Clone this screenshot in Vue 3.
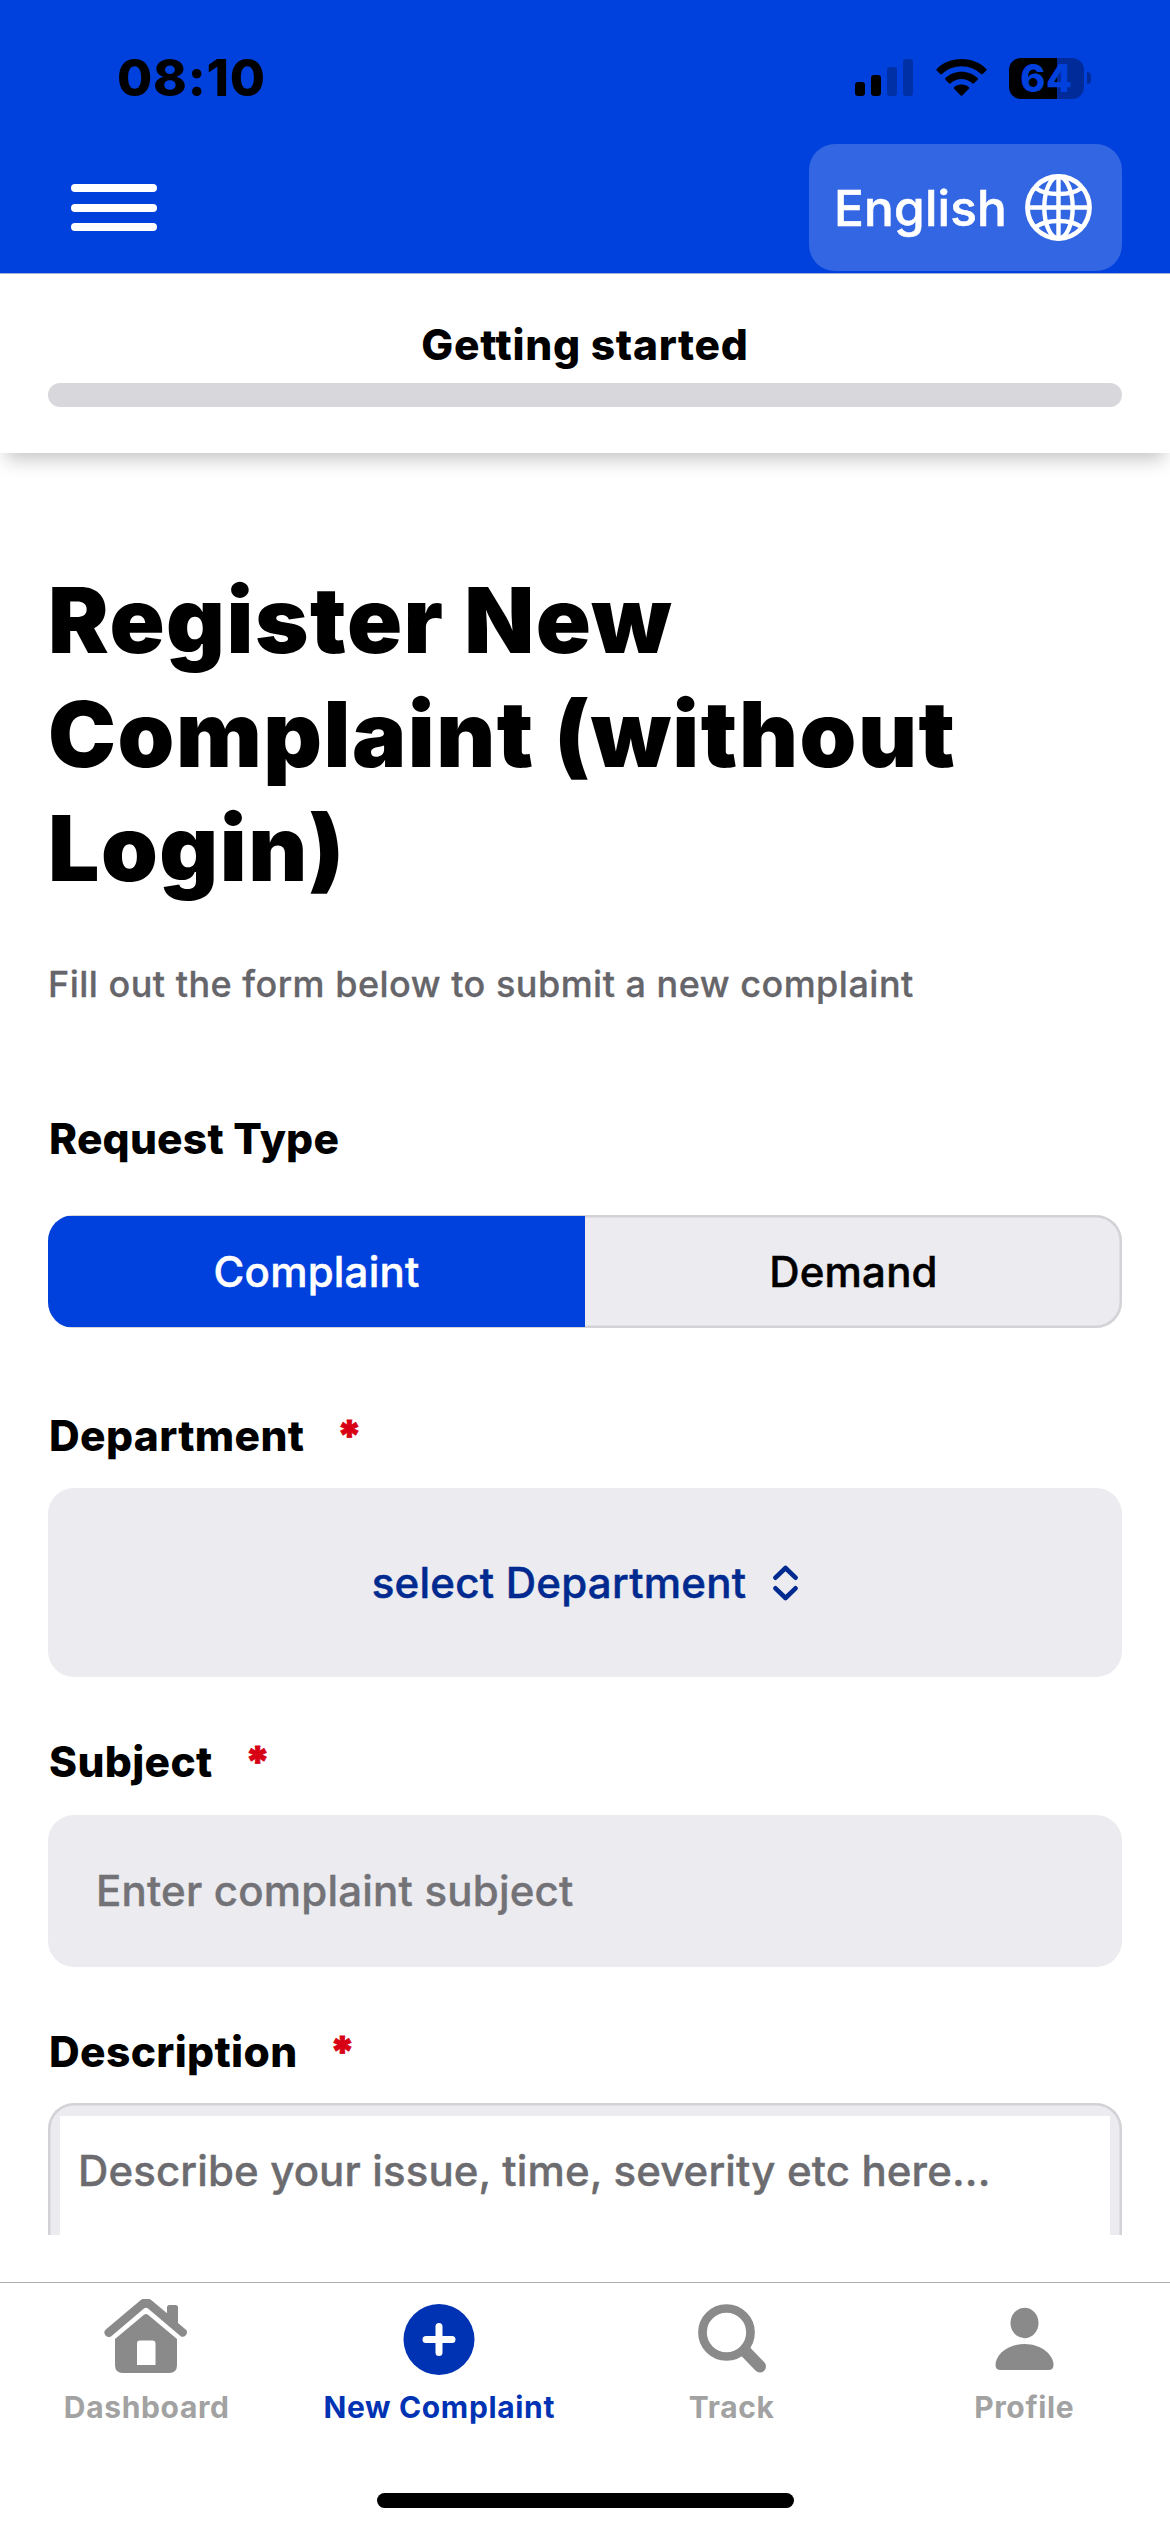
<script setup>
import { ref } from 'vue'

const requestTypes = ['Complaint', 'Demand']
const requestType = ref('Complaint')

const tabs = [
  { id: 'dashboard', label: 'Dashboard' },
  { id: 'new', label: 'New Complaint' },
  { id: 'track', label: 'Track' },
  { id: 'profile', label: 'Profile' },
]
const activeTab = ref('new')
</script>

<template>
  <div class="screen">
    <header class="header">
      <div class="status">
        <span class="time">08:10</span>
        <div class="indicators">
          <svg class="signal" width="58" height="38" viewBox="0 0 58 38">
            <rect x="0" y="23" width="10" height="14" rx="3" />
            <rect x="16" y="16" width="10" height="21" rx="3" />
            <rect x="32" y="8" width="10" height="29" rx="3" opacity=".25" />
            <rect x="48" y="0" width="10" height="37" rx="3" opacity=".25" />
          </svg>
          <svg class="wifi" width="51" height="38" viewBox="0 0 51 38">
            <path d="M25.500 0C35.500 0 44.300 3.800 50.300 9.900C50.800 10.400 50.800 11 50.300 11.500L46.700 15.100C46.200 15.600 45.600 15.600 45.100 15.100C40 10.200 33.100 7.200 25.500 7.200S11 10.200 5.900 15.100C5.400 15.600 4.800 15.600 4.300 15.100L.7 11.500C.2 11 .2 10.400 .7 9.900C6.700 3.800 15.500 0 25.500 0Z" />
            <path d="M25.500 12.700C31.800 12.700 37.500 15.100 41.600 19.100C42.100 19.600 42.100 20.200 41.600 20.700L38 24.300C37.500 24.800 36.900 24.800 36.400 24.300C33.500 21.600 29.700 20 25.500 20S17.500 21.600 14.600 24.300C14.100 24.800 13.500 24.800 13 24.300L9.400 20.700C8.900 20.200 8.900 19.600 9.400 19.100C13.500 15.100 19.200 12.700 25.500 12.700Z" />
            <path d="M25.500 25.600C28.300 25.600 30.900 26.600 32.900 28.200C33.400 28.700 33.400 29.300 32.900 29.800L26.300 36.400C25.800 36.900 25.200 36.900 24.700 36.400L18.100 29.800C17.600 29.300 17.600 28.700 18.100 28.200C20.100 26.600 22.700 25.600 25.500 25.600Z" />
          </svg>
          <div class="battery">
            <div class="cell">64</div>
            <div class="nub"></div>
          </div>
        </div>
      </div>
      <div class="nav">
        <div class="menu"><i></i><i></i><i></i></div>
        <div class="language">
          <span>English</span>
          <svg width="67" height="67" viewBox="0 0 67 67" fill="none" stroke="#fff">
            <circle cx="33.500" cy="33.500" r="31" stroke-width="4.800" />
            <g stroke-width="4.400">
              <path d="M33.500 3V64M3 33.500H64" />
              <ellipse cx="33.500" cy="33.500" rx="14.200" ry="31" />
              <path d="M10.500 14C16 18 24 20 33.500 20S51 18 56.500 14M10.500 53C16 49 24 47 33.500 47S51 49 56.500 53" />
            </g>
          </svg>
        </div>
      </div>
    </header>

    <section class="progress">
      <div class="progress-title">Getting started</div>
      <div class="progress-track"></div>
    </section>

    <main class="form">
      <h1>Register New<br />Complaint (without<br />Login)</h1>
      <p class="lead">Fill out the form below to submit a new complaint</p>

      <label class="label request">Request Type</label>
      <div class="segment">
        <div
          v-for="t in requestTypes"
          :key="t"
          class="option"
          :class="{ selected: t === requestType }"
        >{{ t }}</div>
      </div>

      <label class="label">Department<b>*</b></label>
      <div class="select">
        <span>select Department</span>
        <svg width="25" height="36" viewBox="0 0 25 36" fill="none" stroke="#002a8f" stroke-width="4.600" stroke-linecap="round" stroke-linejoin="round">
          <path d="M2.500 12.700L12.500 3L22.500 12.700M2.500 23.300L12.500 33L22.500 23.300" />
        </svg>
      </div>

      <label class="label">Subject<b>*</b></label>
      <div class="input">Enter complaint subject</div>

      <label class="label">Description<b>*</b></label>
      <div class="textarea">
        <div class="textarea-inner">Describe your issue, time, severity etc here...</div>
      </div>
    </main>

    <nav class="tabs">
      <div v-for="tab in tabs" :key="tab.id" class="tab" :class="{ active: tab.id === activeTab }">
        <svg v-if="tab.id === 'dashboard'" width="86" height="80" viewBox="0 0 86 80">
          <path d="M64 8.500Q64 6 66.500 6H72.500Q75 6 75 8.500V24L83.500 31.300A4.500 4.500 0 0 1 78 37.500L45 9.600Q43 8 41 9.600L8 37.500A4.500 4.500 0 0 1 2.200 31L37.500 1.200Q43 -2.600 48.500 1.200L64 14.200Z" />
          <path fill-rule="evenodd" d="M41 15.800Q43 14.200 45 15.800L74 40V66Q74 74 66 74H20Q12 74 12 66V40ZM37 41.500Q34 41.500 34 44.500V66H52.500V44.500Q52.500 41.500 49.500 41.500Z" />
        </svg>
        <svg v-else-if="tab.id === 'new'" width="72" height="80" viewBox="0 0 72 80">
          <circle cx="36" cy="40.500" r="35.500" />
          <path d="M36 27.500V53.500M23 40.500H49" stroke="#fff" stroke-width="7" stroke-linecap="round" />
        </svg>
        <svg v-else-if="tab.id === 'track'" width="72" height="80" viewBox="0 0 72 80" fill="none" stroke="currentColor">
          <circle cx="31.500" cy="33.500" r="24" stroke-width="8.700" />
          <path d="M50 52L65 67.500" stroke-width="12" stroke-linecap="round" />
        </svg>
        <svg v-else width="60" height="80" viewBox="0 0 60 80">
          <ellipse cx="30.500" cy="24" rx="14" ry="15.200" />
          <path d="M30.500 45C47.500 45 59.500 56 59.500 66Q59.500 71 54.500 71H6.500Q1.500 71 1.500 66C1.500 56 13.500 45 30.500 45Z" />
        </svg>
        <span>{{ tab.label }}</span>
      </div>
    </nav>
    <div class="home-indicator"></div>
  </div>
</template>

<style>
body {
  margin: 0;
  background: #fff;
}
</style>

<style scoped>
.screen {
  width: 1170px;
  height: 2532px;
  display: flex;
  flex-direction: column;
  overflow: hidden;
  background: #fff;
  color: #000;
  font-family: Inter, "Liberation Sans", sans-serif;
  font-weight: 500;
}
.screen svg {
  display: block;
  flex: none;
}

.header {
  flex: none;
  height: 273px;
  background: #0040dd;
  border-bottom: 1px solid #a3b1d6;
}
.status {
  box-sizing: border-box;
  height: 144px;
  padding: 48px 79px 36px 117px;
  display: flex;
  align-items: center;
  justify-content: space-between;
}
.time {
  font-size: 51px;
  line-height: 60px;
  font-weight: 800;
  letter-spacing: 0.800px;
}
.indicators {
  display: flex;
  align-items: center;
}
.wifi {
  margin: 0 22px 0 23px;
}
.battery {
  display: flex;
  align-items: center;
  gap: 3px;
}
.cell {
  width: 75px;
  height: 41px;
  border-radius: 12px;
  background: linear-gradient(90deg, #000 48px, #002b99 48px);
  color: #0040dd;
  font-size: 38px;
  line-height: 41px;
  font-weight: 800;
  letter-spacing: 0.500px;
  text-align: center;
}
.nub {
  width: 4px;
  height: 12px;
  border-radius: 0 5px 5px 0;
  background: #002b99;
}
.nav {
  display: flex;
  align-items: center;
  justify-content: space-between;
  padding: 0 48px 0 71px;
}
.menu {
  display: flex;
  flex-direction: column;
  gap: 11.300px;
}
.menu i {
  width: 86px;
  height: 8px;
  border-radius: 4px;
  background: #fff;
}
.language {
  box-sizing: border-box;
  width: 313px;
  height: 127px;
  padding: 0 30px 0 25px;
  border-radius: 26px;
  background: #3366e3;
  color: #fff;
  display: flex;
  align-items: center;
  justify-content: space-between;
  font-size: 49.500px;
  letter-spacing: 0.200px;
  -webkit-text-stroke: 0.600px currentColor;
}

.progress {
  flex: none;
  position: relative;
  box-sizing: border-box;
  height: 179px;
  padding: 45px 48px 0;
  background: #fff;
  box-shadow: 0 12px 18px -6px rgba(0, 0, 0, 0.24);
}
.progress-title {
  margin-bottom: 12px;
  text-align: center;
  font-size: 42.500px;
  line-height: 52px;
  font-weight: 800;
  letter-spacing: 0.700px;
}
.progress-track {
  height: 24px;
  border-radius: 12px;
  background: #d8d8dc;
}

.form {
  flex: none;
  box-sizing: border-box;
  height: 1782px;
  padding: 110px 48px 0;
  display: flex;
  flex-direction: column;
  overflow: hidden;
}
.form > * {
  flex: none;
}
h1 {
  margin: 0 0 54px;
  font-size: 91px;
  line-height: 114px;
  font-weight: 900;
  letter-spacing: 1.500px;
  white-space: nowrap;
}
.lead {
  margin: 0 0 104px;
  font-size: 36px;
  line-height: 50px;
  letter-spacing: 0.490px;
  color: #65656a;
  -webkit-text-stroke: 0.300px currentColor;
}
.label {
  padding-left: 1px;
  font-size: 42.500px;
  line-height: 52px;
  font-weight: 800;
  letter-spacing: 0.350px;
}
.label.request {
  letter-spacing: 0.200px;
}
.label b {
  margin-left: 32px;
  color: #d70015;
  font-weight: 900;
  -webkit-text-stroke: 0.800px currentColor;
}
.segment {
  box-sizing: border-box;
  height: 113px;
  margin: 50px 0 82px;
  display: flex;
  border-radius: 26px;
  background: #ebebf0;
  box-shadow: inset 0 0 0 2.500px #d3d3d7;
  overflow: hidden;
}
.option {
  flex: 1;
  display: flex;
  align-items: center;
  justify-content: center;
  font-size: 42px;
  letter-spacing: 0.200px;
  -webkit-text-stroke: 0.500px currentColor;
}
.option.selected {
  margin: 1px 0;
  background: #0040dd;
  color: #fff;
}
.select {
  height: 189px;
  margin: 26px 0 59px;
  border-radius: 26px;
  background: #ebebf0;
  color: #002a8f;
  display: flex;
  align-items: center;
  justify-content: center;
  gap: 27px;
  font-size: 42px;
  letter-spacing: 0.250px;
  -webkit-text-stroke: 0.500px currentColor;
}
.input {
  height: 152px;
  margin: 27px 0 59px;
  padding-left: 48px;
  border-radius: 26px;
  background: #ebebf0;
  color: #727277;
  font-size: 42px;
  line-height: 152px;
  letter-spacing: 0.200px;
  -webkit-text-stroke: 0.400px currentColor;
}
.textarea {
  box-sizing: border-box;
  height: 300px;
  margin-top: 25px;
  padding: 13px 12px;
  border-radius: 26px;
  background: #ebebf0;
  box-shadow: inset 0 0 0 2.500px #d3d3d7;
}
.textarea-inner {
  box-sizing: border-box;
  height: 274px;
  padding: 29px 18px;
  background: #fff;
  color: #6c6c70;
  font-size: 42px;
  line-height: 52px;
  letter-spacing: 0.124px;
  white-space: nowrap;
  -webkit-text-stroke: 0.400px currentColor;
}

.tabs {
  flex: none;
  box-sizing: border-box;
  height: 211px;
  margin-top: 47px;
  padding-top: 16px;
  border-top: 1px solid #adadb0;
  display: grid;
  grid-template-columns: repeat(4, 1fr);
}
.tab {
  display: flex;
  flex-direction: column;
  align-items: center;
  color: #8a8a8a;
  fill: currentColor;
}
.tab span {
  margin-top: 8px;
  padding-left: 1px;
  font-size: 30px;
  line-height: 40px;
  font-weight: 700;
  letter-spacing: 0.650px;
  color: #a2a2a2;
}
.tab.active,
.tab.active span {
  color: #0033b3;
}
.home-indicator {
  flex: none;
  width: 417px;
  height: 15px;
  margin: 0 auto;
  border-radius: 8px;
  background: #000;
}
</style>
